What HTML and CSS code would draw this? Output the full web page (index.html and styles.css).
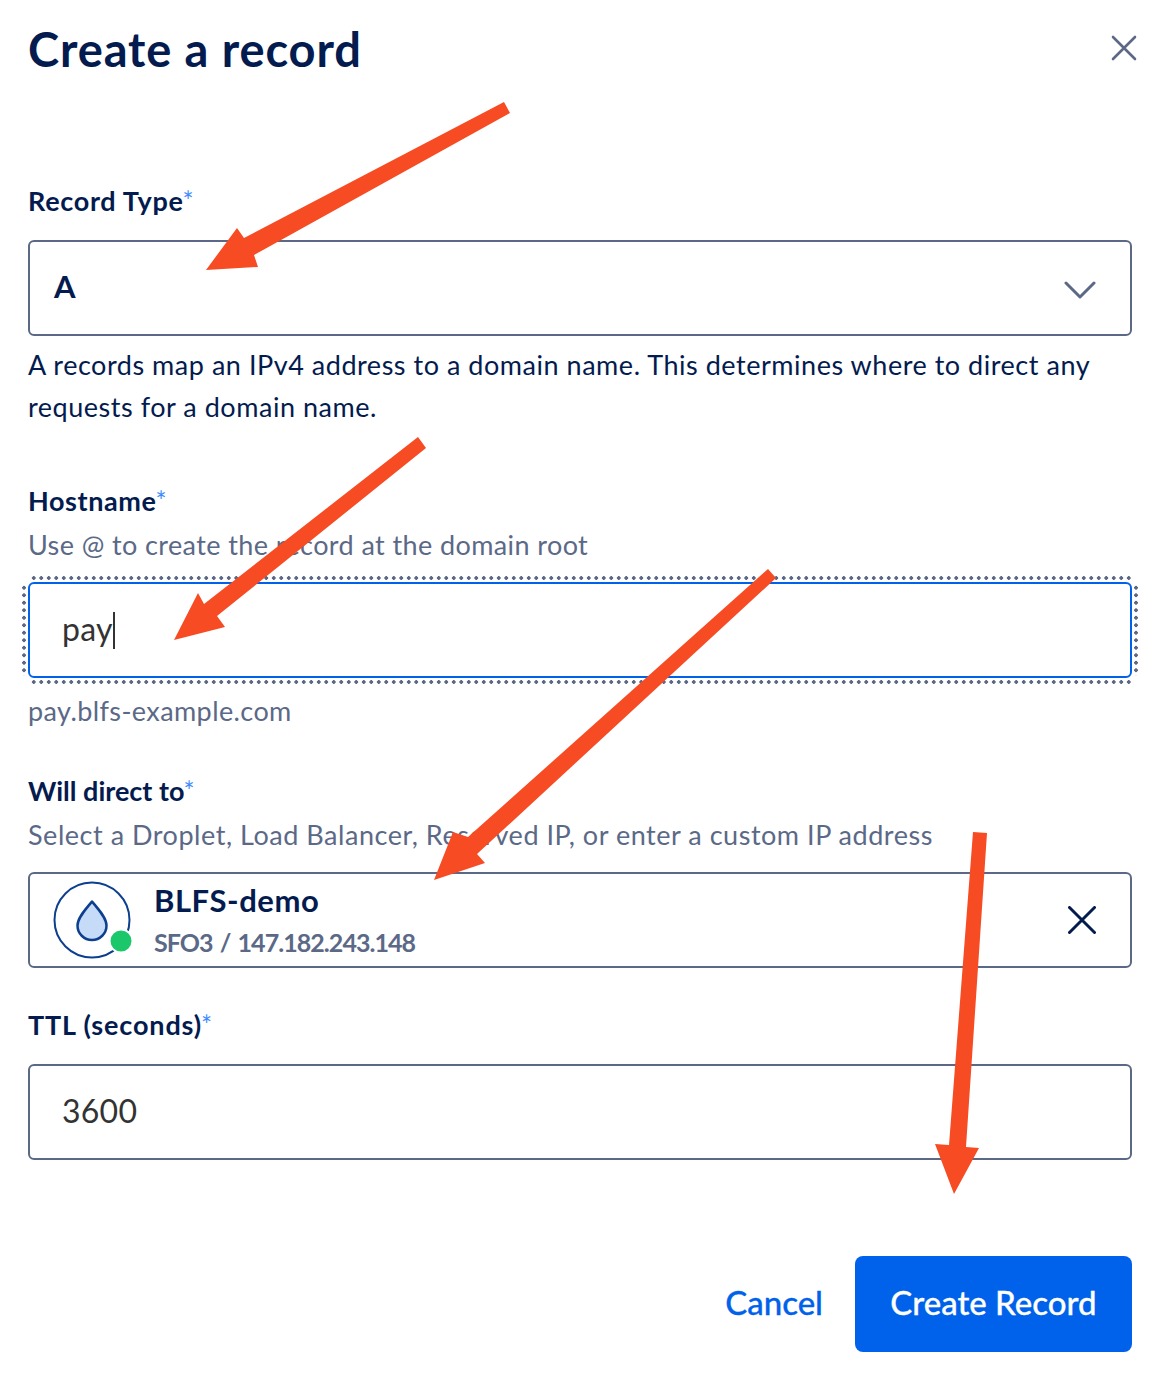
FILE: index.html
```html
<!DOCTYPE html>
<html lang="en">
<head>
<meta charset="utf-8">
<title>Create a record</title>
<link rel="stylesheet" href="styles.css">
</head>
<body>
<main class="dialog">
  <header class="head">
    <h1 class="title">Create a record</h1>
    <svg class="close" viewBox="0 0 26 26" width="26" height="26"><path d="M2 2 24 24M24 2 2 24"/></svg>
  </header>

  <label class="label label-first">Record Type<span class="req">*</span></label>
  <div class="box box-select">
    <span class="select-value">A</span>
    <svg class="chevron" viewBox="0 0 32 18" width="32" height="18"><path d="M2 2 16 16 30 2"/></svg>
  </div>
  <p class="help">A records map an IPv4 address to a domain name. This determines where to direct any requests for a domain name.</p>

  <label class="label label-host">Hostname<span class="req">*</span></label>
  <p class="hint">Use @ to create the record at the domain root</p>
  <div class="box box-focus"><span class="input-text">pay</span><span class="caret"></span></div>
  <p class="hint hint-after">pay.blfs-example.com</p>

  <label class="label label-direct">Will direct to<span class="req">*</span></label>
  <p class="hint hint-wide">Select a Droplet, Load Balancer, Reserved IP, or enter a custom IP address</p>
  <div class="box box-target">
    <svg class="droplet" viewBox="0 0 84 84" width="84" height="84">
      <circle class="ring" cx="42" cy="42" r="37.5"/>
      <path class="drop" d="M42 23.5C36 31 27.500 39.500 27.500 47.500A14.500 14.500 0 0 0 56.500 47.500C56.500 39.500 48 31 42 23.500Z"/>
      <circle class="dot" cx="71" cy="63" r="11.500"/>
    </svg>
    <div class="target-text">
      <span class="target-name">BLFS-demo</span>
      <span class="target-meta">SFO3 / 147.182.243.148</span>
    </div>
    <svg class="remove" viewBox="0 0 28 28" width="28" height="28"><path d="M1.500 1.500 26.500 26.500M26.500 1.500 1.500 26.500"/></svg>
  </div>

  <label class="label label-ttl">TTL (seconds)<span class="req">*</span></label>
  <div class="box box-ttl"><span class="input-text">3600</span></div>

  <footer class="actions">
    <span class="cancel">Cancel</span>
    <span class="submit">Create Record</span>
  </footer>
</main>

<svg class="arrows" viewBox="0 0 1170 1396" width="1170" height="1396">
  <polygon points="504,102 510,113 254,255 258,267 206,270 237,228 244,238"/>
  <polygon points="418,437 426,448 217,616 225,627 174,640 198,593 204,604"/>
  <polygon points="768,569 776,578 477,854 485,863 434,880 453,832 468,837"/>
  <polygon points="973,832 987,833 966,1147 979,1148 954,1194 935,1144 949,1145"/>
</svg>
</body>
</html>
```

FILE: styles.css
```css
* { box-sizing: border-box; }
html, body { margin: 0; padding: 0; background: #fff; }
body {
  position: relative;
  width: 1170px;
  height: 1396px;
  overflow: hidden;
  font-family: "Lato", "Liberation Sans", sans-serif;
  color: #031b4e;
}
.dialog {
  display: flex;
  flex-direction: column;
  padding: 19px 38px 0 28px;
}
.head {
  display: flex;
  justify-content: space-between;
  align-items: flex-start;
  height: 61px;
}
.title {
  margin: 0;
  font-size: 47px;
  line-height: 60px;
  font-weight: 700;
  letter-spacing: 0.9px;
}
.close {
  margin: 16px -5px 0 0;
  flex: none;
}
.close path {
  fill: none;
  stroke: #5b6987;
  stroke-width: 2.6;
  stroke-linecap: round;
}
.label {
  display: block;
  height: 32px;
  font-size: 27px;
  line-height: 32px;
  font-weight: 700;
}
.label-first { margin-top: 105px; letter-spacing: 0.7px; }
.label-host { margin-top: 57px; letter-spacing: 0.6px; }
.label-direct { margin-top: 48px; }
.label-ttl { margin-top: 41px; letter-spacing: 0.85px; }
.req {
  margin-left: -1px;
  color: #3d8bff;
  font-size: 26px;
  font-weight: 400;
  letter-spacing: 0;
  vertical-align: 0;
  line-height: 0;
}
.box {
  display: flex;
  align-items: center;
  height: 96px;
  border: 2px solid #5b6987;
  border-radius: 6px;
  background: #fff;
}
.box-select {
  justify-content: space-between;
  margin-top: 23px;
  padding: 0 34px 0 24px;
}
.select-value {
  padding-bottom: 4px;
  font-size: 31px;
  font-weight: 700;
}
.chevron {
  flex: none;
  margin-top: 4px;
}
.chevron path {
  fill: none;
  stroke: #5b6987;
  stroke-width: 3;
  stroke-linecap: round;
  stroke-linejoin: round;
}
.help {
  margin: 8px 0 0;
  font-size: 27px;
  line-height: 42px;
  letter-spacing: 0.53px;
}
.hint {
  margin: 12px 0 0;
  font-size: 27px;
  line-height: 32px;
  letter-spacing: 0.4px;
  color: #5b6987;
}
.hint-wide { letter-spacing: 0.53px; }
.hint-after { margin-top: 17px; }
.box-focus {
  position: relative;
  margin-top: 21px;
  padding-left: 32px;
  border-color: #0061eb;
}
.box-focus::before,
.box-focus::after {
  content: "";
  position: absolute;
  background-image:
    radial-gradient(circle, #5b6987 1.7px, transparent 2px),
    radial-gradient(circle, #5b6987 1.7px, transparent 2px);
}
.box-focus::before {
  top: -8px;
  right: -4px;
  bottom: -8px;
  left: 0;
  background-size: 7.5px 4px;
  background-repeat: repeat-x;
  background-position: left top, left bottom;
}
.box-focus::after {
  top: 0;
  right: -8px;
  bottom: 0;
  left: -8px;
  background-size: 4px 7.5px;
  background-repeat: repeat-y;
  background-position: left top, right top;
}
.input-text {
  padding-bottom: 4px;
  font-size: 32px;
  letter-spacing: 0.25px;
  color: #333;
}
.box-ttl {
  margin-top: 23px;
  padding-left: 32px;
}
.caret {
  width: 2px;
  height: 37px;
  background: #333;
}
.box-target {
  margin-top: 21px;
  padding: 0 34px 0 20px;
}
.droplet { flex: none; }
.ring {
  fill: #fff;
  stroke: #0d3f8f;
  stroke-width: 2;
}
.drop {
  fill: #c6dbf8;
  stroke: #0d3f8f;
  stroke-width: 2.500;
  stroke-linejoin: round;
}
.dot {
  fill: #1ac86b;
  stroke: #fff;
  stroke-width: 2;
}
.target-text {
  display: flex;
  flex-direction: column;
  flex: 1;
  margin-left: 20px;
  padding-top: 2px;
}
.target-name {
  font-size: 31px;
  line-height: 42px;
  font-weight: 700;
  letter-spacing: 0.55px;
}
.target-meta {
  font-size: 25px;
  line-height: 42px;
  font-weight: 700;
  letter-spacing: -0.95px;
  word-spacing: 2px;
  color: #5b6987;
}
.remove { flex: none; }
.remove path {
  fill: none;
  stroke: #031b4e;
  stroke-width: 3;
  stroke-linecap: round;
}
.actions {
  display: flex;
  justify-content: flex-end;
  align-items: center;
  gap: 32px;
  margin-top: 96px;
}
.cancel {
  padding-bottom: 4px;
  font-size: 33px;
  font-weight: 500;
  color: #0061eb;
  -webkit-text-stroke: 0.3px #0061eb;
}
.submit {
  display: flex;
  justify-content: center;
  align-items: center;
  width: 277px;
  height: 96px;
  padding-bottom: 4px;
  border-radius: 8px;
  background: #0061eb;
  color: #fff;
  font-size: 33px;
  font-weight: 500;
  -webkit-text-stroke: 0.3px #fff;
}
.arrows {
  position: absolute;
  top: 0;
  left: 0;
  pointer-events: none;
}
.arrows polygon { fill: #f74b23; }
```
